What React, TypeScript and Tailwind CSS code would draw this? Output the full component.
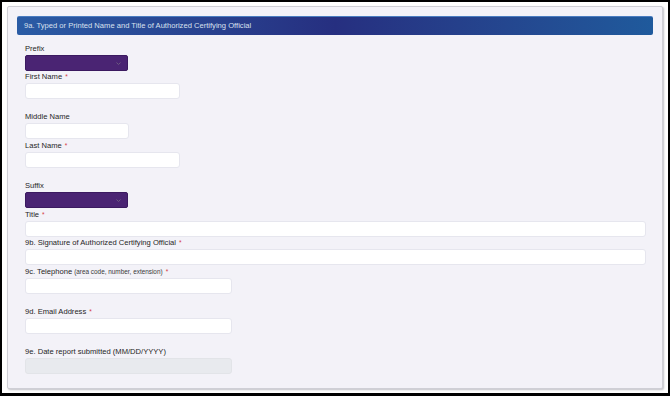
import React from "react";

type Field = {
  label: string;
  hint?: string;
  required?: boolean;
  kind: "input" | "select" | "disabled";
  width: string;
  mt: string;
};

const fields: Field[] = [
  { label: "Prefix", kind: "select", width: "w-[103px]", mt: "mt-[9px]" },
  { label: "First Name", required: true, kind: "input", width: "w-[155px]", mt: "mt-[1px]" },
  { label: "Middle Name", kind: "input", width: "w-[104px]", mt: "mt-[13px]" },
  { label: "Last Name", required: true, kind: "input", width: "w-[155px]", mt: "mt-[2px]" },
  { label: "Suffix", kind: "select", width: "w-[103px]", mt: "mt-[13px]" },
  { label: "Title", required: true, kind: "input", width: "w-full", mt: "mt-[2px]" },
  { label: "9b. Signature of Authorized Certifying Official", required: true, kind: "input", width: "w-full", mt: "mt-[1px]" },
  { label: "9c. Telephone", hint: "(area code, number, extension)", required: true, kind: "input", width: "w-[207px]", mt: "mt-[2px]" },
  { label: "9d. Email Address", required: true, kind: "input", width: "w-[207px]", mt: "mt-[13px]" },
  { label: "9e. Date report submitted (MM/DD/YYYY)", kind: "disabled", width: "w-[207px]", mt: "mt-[13px]" },
];

function Control({ f }: { f: Field }) {
  if (f.kind === "select") {
    return (
      <div className={`${f.width} flex h-[16px] items-center justify-end rounded-[2px] border border-[#3b1a60] bg-[#4a2473] pr-[6px]`}>
        <svg width="5" height="3" viewBox="0 0 5 3">
          <path d="M0.5 0.5L2.5 2.5L4.5 0.5" stroke="#6e5f80" strokeWidth="0.9" fill="none" />
        </svg>
      </div>
    );
  }
  if (f.kind === "disabled") {
    return <div className={`${f.width} h-[16px] rounded-[3px] border border-[#e2e4e8] bg-[#e8eaee]`}></div>;
  }
  return <div className={`${f.width} h-[16px] rounded-[3px] border border-[#e6e6ee] bg-white`}></div>;
}

export default function App() {
  return (
    <div
      className="h-[396px] w-[670px] border-x-2 border-t-2 border-b-[3px] border-black bg-white px-[5px] pt-[4px] pb-[4px]"
      style={{ fontFamily: '"Liberation Sans", Arial, sans-serif' }}
    >
      <div className="h-full rounded-[2px] border border-[#cfcfd6] bg-[#f3f2f8] px-[9px] pt-[9px] shadow-[1px_1px_2px_#c0c0c6]">
        {/* section header */}
        <div className="flex h-[19px] items-center rounded-[2px] border-t border-[#4a7cc0] bg-gradient-to-r from-[#2a5ca5] via-[#262f80] to-[#1f5a9c] px-[7px] text-[7.6px] text-[#d9e0ee]">
          9a. Typed or Printed Name and Title of Authorized Certifying Official
        </div>

        <div className="pl-[8px] pr-[7px]">
          {fields.map((f, i) => (
            <div key={i} className={f.mt}>
              <div className="flex h-[10px] items-center text-[7.6px] leading-[10px] text-[#262626]">
                <span>{f.label}</span>
                {f.hint && <span className="ml-[2px] text-[6.4px] text-[#3a3a3a]">{f.hint}</span>}
                {f.required && <span className="ml-[3px] text-[6.5px] text-[#d6383e]">*</span>}
              </div>
              <div className="mt-[1px]">
                <Control f={f} />
              </div>
            </div>
          ))}
        </div>
      </div>
    </div>
  );
}
